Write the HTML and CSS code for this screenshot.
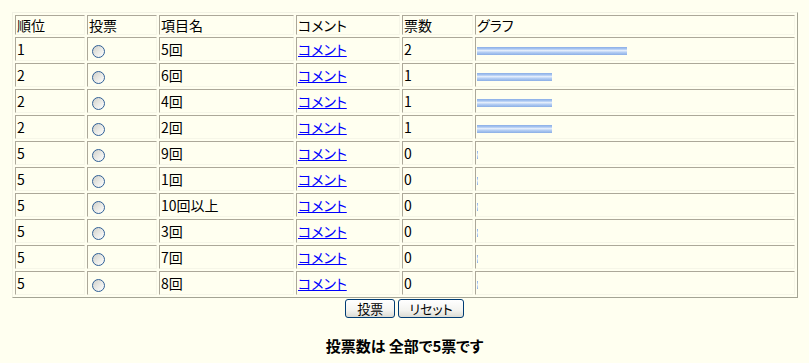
FILE: index.html
```html
<!DOCTYPE html>
<html lang="ja">
<head>
    <meta charset="UTF-8">
    <title>投票結果</title>
    <link rel="stylesheet" href="styles.css">
</head>
<body>
    <form class="vote-form">
        <table class="vote-table">
            <tr class="head-row">
                <td class="col-rank">順位</td>
                <td class="col-vote">投票</td>
                <td class="col-name">項目名</td>
                <td class="col-comment">コメント</td>
                <td class="col-count">票数</td>
                <td class="col-graph">グラフ</td>
            </tr>
            <tr>
                <td>1</td>
                <td><input type="radio" name="item" value="5"></td>
                <td>5回</td>
                <td><a href="#">コメント</a></td>
                <td>2</td>
                <td><span class="bar" style="width: 150px"></span></td>
            </tr>
            <tr>
                <td>2</td>
                <td><input type="radio" name="item" value="6"></td>
                <td>6回</td>
                <td><a href="#">コメント</a></td>
                <td>1</td>
                <td><span class="bar" style="width: 75px"></span></td>
            </tr>
            <tr>
                <td>2</td>
                <td><input type="radio" name="item" value="4"></td>
                <td>4回</td>
                <td><a href="#">コメント</a></td>
                <td>1</td>
                <td><span class="bar" style="width: 75px"></span></td>
            </tr>
            <tr>
                <td>2</td>
                <td><input type="radio" name="item" value="2"></td>
                <td>2回</td>
                <td><a href="#">コメント</a></td>
                <td>1</td>
                <td><span class="bar" style="width: 75px"></span></td>
            </tr>
            <tr>
                <td>5</td>
                <td><input type="radio" name="item" value="9"></td>
                <td>9回</td>
                <td><a href="#">コメント</a></td>
                <td>0</td>
                <td><span class="bar" style="width: 1px"></span></td>
            </tr>
            <tr>
                <td>5</td>
                <td><input type="radio" name="item" value="1"></td>
                <td>1回</td>
                <td><a href="#">コメント</a></td>
                <td>0</td>
                <td><span class="bar" style="width: 1px"></span></td>
            </tr>
            <tr>
                <td>5</td>
                <td><input type="radio" name="item" value="10"></td>
                <td>10回以上</td>
                <td><a href="#">コメント</a></td>
                <td>0</td>
                <td><span class="bar" style="width: 1px"></span></td>
            </tr>
            <tr>
                <td>5</td>
                <td><input type="radio" name="item" value="3"></td>
                <td>3回</td>
                <td><a href="#">コメント</a></td>
                <td>0</td>
                <td><span class="bar" style="width: 1px"></span></td>
            </tr>
            <tr>
                <td>5</td>
                <td><input type="radio" name="item" value="7"></td>
                <td>7回</td>
                <td><a href="#">コメント</a></td>
                <td>0</td>
                <td><span class="bar" style="width: 1px"></span></td>
            </tr>
            <tr>
                <td>5</td>
                <td><input type="radio" name="item" value="8"></td>
                <td>8回</td>
                <td><a href="#">コメント</a></td>
                <td>0</td>
                <td><span class="bar" style="width: 1px"></span></td>
            </tr>
        </table>

        <div class="buttons">
            <button type="submit" class="btn-vote">投票</button>
            <button type="reset" class="btn-reset">リセット</button>
        </div>
    </form>

    <p class="total">投票数は 全部で5票です</p>
</body>
</html>
```

FILE: styles.css
```css
body {
    margin: 0;
    background: #fffff0;
    color: #000;
    font-family: "Noto Sans CJK JP", "Liberation Sans", sans-serif;
    font-size: 14px;
    font-feature-settings: "palt";
}

.vote-form {
    margin: 0;
}

.vote-table {
    margin: 12px 0 0 12px;
    width: 786px;
    table-layout: fixed;
    border-collapse: separate;
    border-spacing: 2px;
    border: 1px solid;
    border-color: #f2f2e4 #a4a494 #a4a494 #f2f2e4;
}

.vote-table td {
    padding: 1px;
    border: 1px solid;
    border-color: #aca899 #f6f6e8 #f6f6e8 #aca899;
    line-height: 20px;
    white-space: nowrap;
    vertical-align: middle;
}

.head-row td {
    line-height: 16px;
}

.col-rank { width: 66px; }
.col-vote { width: 66px; }
.col-name { width: 131px; }
.col-comment { width: 100px; }
.col-count { width: 67px; }

a {
    color: #0000ff;
}

input[type="radio"] {
    -webkit-appearance: none;
    appearance: none;
    box-sizing: border-box;
    width: 13px;
    height: 13px;
    margin: 0 0 0 3px;
    border: 1px solid #2f5f96;
    border-radius: 50%;
    background: linear-gradient(135deg, #cfcfc9 0%, #e9e9e5 50%, #ffffff 100%);
    vertical-align: middle;
}

.bar {
    display: inline-block;
    height: 8px;
    vertical-align: middle;
    background: linear-gradient(to bottom, #8aaee6 0%, #a9c6f2 25%, #e6effc 45%, #b6cff4 65%, #8aaee6 100%);
}

.buttons {
    display: flex;
    justify-content: center;
    gap: 3px;
    margin-top: 1px;
}

button {
    height: 19px;
    padding: 0 10px;
    font-family: inherit;
    font-size: 13px;
    font-feature-settings: "palt";
    line-height: 15px;
    color: #000;
    background: linear-gradient(to bottom, #ffffff 0%, #f4f4f0 60%, #dcdcd4 100%);
    border: 1px solid #003c74;
    border-radius: 3px;
    cursor: pointer;
}

.btn-vote {
    padding: 0 11px;
}

.total {
    margin: 18px 0 0;
    text-align: center;
    font-weight: bold;
    font-size: 15px;
    line-height: 20px;
}
```
